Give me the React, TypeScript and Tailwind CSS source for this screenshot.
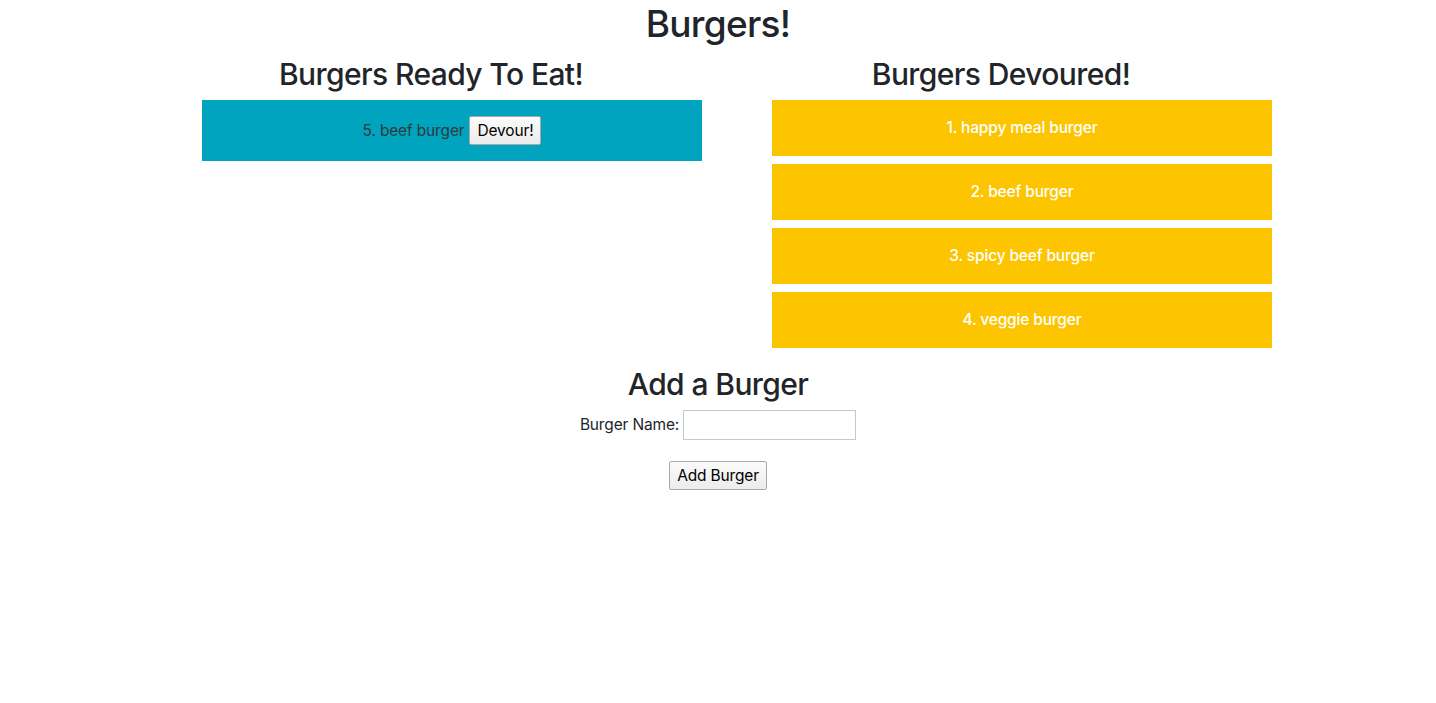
import React from "react";

const ready = [{ id: 5, name: "beef burger" }];

const devoured = [
  { id: 1, name: "happy meal burger" },
  { id: 2, name: "beef burger" },
  { id: 3, name: "spicy beef burger" },
  { id: 4, name: "veggie burger" },
];

const font = "font-['Inter','Liberation_Sans',sans-serif]";

export default function App() {
  return (
    <div className={`min-h-[703px] bg-white text-[15.5px] tracking-[-0.01em] text-[#212529] ${font}`}>
      <div className="mx-auto w-[1140px]">
        <h1 className="h-[48px] text-center text-[37px] leading-[48px] font-medium tracking-[-0.02em]">
          Burgers!
        </h1>

        <div className="mt-[8px] flex">
          {/* Ready to eat */}
          <div className="w-[570px]">
            <h2 className="h-[36px] pr-[4px] text-center text-[30px] leading-[36px] font-medium tracking-[-0.02em]">
              Burgers Ready To Eat!
            </h2>
            <ul className="mt-[8px] ml-[54px] w-[500px]">
              {ready.map((b) => (
                <li
                  key={b.id}
                  className="flex h-[61px] items-center justify-center gap-[5px] bg-[#00a4bf] text-[#2d3a3d]"
                >
                  <span>
                    {b.id}. {b.name}
                  </span>
                  <button className="h-[29px] rounded-[2px] border border-[#a9a9a9] bg-gradient-to-b from-[#fbfbfb] to-[#ececec] px-[7px] text-black">
                    Devour!
                  </button>
                </li>
              ))}
            </ul>
          </div>

          {/* Devoured */}
          <div className="w-[570px]">
            <h2 className="h-[36px] pr-[4px] text-center text-[30px] leading-[36px] font-medium tracking-[-0.02em]">
              Burgers Devoured!
            </h2>
            <ul className="mt-[8px] ml-[54px] flex w-[500px] flex-col gap-[8px]">
              {devoured.map((b) => (
                <li
                  key={b.id}
                  className="flex h-[56px] items-center justify-center bg-[#fdc500] font-medium text-white"
                >
                  {b.id}. {b.name}
                </li>
              ))}
            </ul>
          </div>
        </div>

        {/* Add form */}
        <div className="mt-[17px] flex flex-col items-center">
          <h2 className="h-[38px] text-center text-[30px] leading-[38px] font-medium tracking-[-0.02em]">
            Add a Burger
          </h2>
          <div className="mt-[7px] flex items-center gap-[4px]">
            <label htmlFor="burger">Burger Name:</label>
            <input
              id="burger"
              type="text"
              className="h-[30px] w-[173px] border border-[#c8c8c8] bg-white px-[4px] outline-none"
            />
          </div>
          <button className="mt-[21px] h-[29px] w-[98px] rounded-[2px] border border-[#a9a9a9] bg-gradient-to-b from-[#fbfbfb] to-[#ececec] text-black">
            Add Burger
          </button>
        </div>
      </div>
    </div>
  );
}
